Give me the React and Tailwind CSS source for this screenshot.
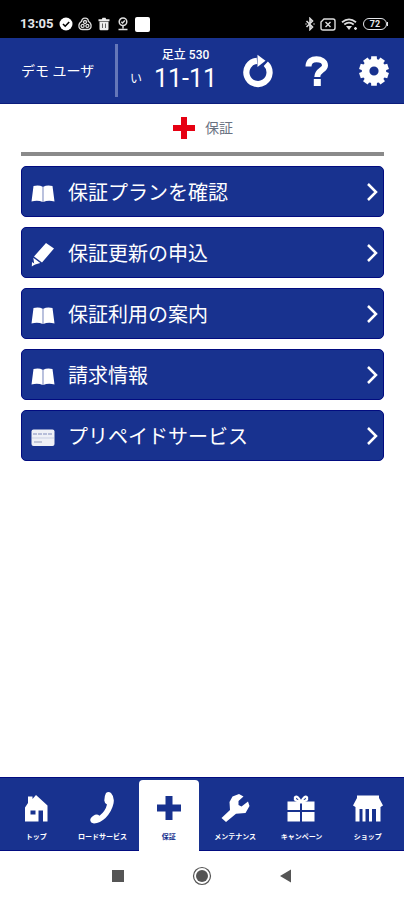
import React from 'react';

const StatusIcons = () => (
  <div className="flex items-center gap-[5px]">
    <svg width="14" height="14" viewBox="0 0 14 14">
      <circle cx="7" cy="7" r="6.5" fill="#fff" />
      <path d="M4 7l2.2 2.2L10.2 5" fill="none" stroke="#000" strokeWidth="1.6" />
    </svg>
    <svg width="14" height="14" viewBox="0 0 14 14" fill="none" stroke="#ddd" strokeWidth="1.3">
      <path d="M7 1.2c2.3 0 3.4 1.6 3.4 3.3 1.7.8 2.7 2.1 2.7 4.2 0 2.6-1.8 3.8-3.8 3.8H4.7c-2 0-3.8-1.2-3.8-3.8 0-2.1 1-3.4 2.7-4.2C3.6 2.8 4.7 1.2 7 1.2z" />
      <circle cx="7" cy="5" r="1.5" />
      <circle cx="4.6" cy="8.9" r="1.5" />
      <circle cx="9.4" cy="8.9" r="1.5" />
    </svg>
    <svg width="14" height="14" viewBox="0 0 14 14" fill="#eee">
      <path d="M1.5 2.2h3.300l.7-1.400h3l.7 1.400h3.300v2h-11zM2.500 4.700h9V12q0 1.200-1.200 1.200H3.700q-1.200 0-1.200-1.200z" />
      <path d="M5.500 6.500v4.500M8.500 6.500v4.500" stroke="#666" strokeWidth="1" />
    </svg>
    <svg width="14" height="14" viewBox="0 0 14 14" fill="none" stroke="#ddd" strokeWidth="1.5">
      <circle cx="7" cy="4.8" r="3.800" />
      <path d="M5.300 4.800l1.300 1.200 2.200-2.400M7 8.500v3M2.500 12.500h9" />
    </svg>
    <span className="w-[15px] h-[15px] rounded-xs bg-white" />
  </div>
);

const StatusBar = () => (
  <div className="h-[38px] shrink-0 bg-black text-white flex items-end justify-between pl-5 pr-4 pb-[6px]">
    <div className="flex items-center gap-[5px]">
      <span className="text-[13px] leading-4 font-bold text-gray-200">13:05</span>
      <StatusIcons />
    </div>
    <div className="flex items-center gap-[5px] pb-px">
      <svg width="10" height="14" viewBox="0 0 10 14" fill="none" stroke="#ddd" strokeWidth="1.6">
        <path d="M1.500 4l6 6L5 12.500v-11L7.500 4l-6 6" />
        <path d="M.5 7h1M8.500 7h1" />
      </svg>
      <svg width="16" height="13" viewBox="0 0 16 13" fill="none" stroke="#ddd" strokeWidth="1.4">
        <path d="M4 1h9q2 0 2 2v7q0 2-2 2H3q-2 0-2-2V4z" />
        <path d="M5.500 4l5 5M10.500 4l-5 5" />
      </svg>
      <svg width="17" height="13" viewBox="0 0 17 13" fill="none" stroke="#ddd">
        <path d="M1 4.200q7-5.600 14 0" strokeWidth="1.800" />
        <path d="M3.300 6.500q4.700-3.600 9.400 0" strokeWidth="1.800" />
        <path d="M5 8h6l-3 4z" fill="#ddd" stroke="none" />
        <path d="M13 10.500h3M14.500 9v3" strokeWidth="1.300" />
      </svg>
      <span className="flex items-center">
        <span className="w-6 h-3 border border-gray-200 rounded-full text-[9px] leading-[10px] font-bold text-center text-gray-200">72</span>
        <span className="w-px h-1 bg-gray-200" />
      </span>
    </div>
  </div>
);

const GEAR_TEETH = [0, 36, 72, 108, 144, 180, 216, 252, 288, 324];

const Header = () => (
  <header className="h-[66px] shrink-0 bg-[#18328f] text-white flex items-center border-b border-[#0b1d7c]">
    <span className="w-[115px] pl-[21px] text-[14px] leading-5 whitespace-nowrap">デモ ユーザ</span>
    <span className="w-[3px] h-[53px] bg-[#6577b9]" />
    <div className="flex items-end pl-3">
      <span className="text-[12px] leading-4 pb-2">い</span>
      <div className="flex flex-col items-center pl-3">
        <span className="text-[12px] leading-4 font-medium whitespace-nowrap">足立 530</span>
        <span className="text-[25px] leading-8 whitespace-nowrap">11-11</span>
      </div>
    </div>
    <div className="flex-1 flex items-center justify-end gap-[26px] pr-[14px]">
      <button type="button" aria-label="更新">
        <svg width="32" height="34" viewBox="0 0 32 34">
          <path d="M23.8 9.800A11.600 11.600 0 1 1 15 6.800" fill="none" stroke="#fff" strokeWidth="6.200" />
          <path d="M15.500 .8L23.500 6.800 15.500 13z" fill="#fff" />
        </svg>
      </button>
      <button type="button" aria-label="ヘルプ">
        <svg width="32" height="34" viewBox="0 0 32 34">
          <path d="M8.500 12.500C8.500 7.300 12 5.200 16.500 5.200S25 7.500 25 11.500C25 16 17.300 16 17.300 23" fill="none" stroke="#fff" strokeWidth="6" />
          <path d="M13.800 25h7v7h-7z" fill="#fff" />
        </svg>
      </button>
      <button type="button" aria-label="設定">
        <svg width="32" height="34" viewBox="0 0 32 34" fill="#fff">
          <circle cx="16" cy="17" r="8.400" fill="none" stroke="#fff" strokeWidth="7.600" />
          {GEAR_TEETH.map((deg) => (
            <path key={deg} d="M13 7l.2-4.800h5.600L19 7z" transform={`rotate(${deg} 16 17)`} />
          ))}
        </svg>
      </button>
    </div>
  </header>
);

const BookIcon = () => (
  <svg width="24" height="18" viewBox="0 0 24 18" fill="#fff">
    <path d="M2.500 1Q8-.2 11.700 1.700V17Q7 15 .5 16.500zM21.500 1Q16-.2 12.300 1.700V17q4.700-2 11.200-.5z" />
  </svg>
);

const PencilIcon = () => (
  <svg width="24" height="24" viewBox="0 0 24 24" fill="#fff">
    <path d="M15 0L23 5.500 11 19.500 3 13.500zM2.300 14.800l7 5.200-6 1.700z" />
    <path d="M1 19l3.200 2.300L.8 23.500z" />
  </svg>
);

const CardIcon = () => (
  <svg width="24" height="18" viewBox="0 0 24 18">
    <rect x=".5" y=".5" width="23" height="16.500" rx="2" fill="#eef0f6" />
    <path d="M2 5h20" stroke="#a5add0" strokeWidth="1.500" strokeDasharray="4 1" />
    <path d="M1 9h22" stroke="#c9cfe3" strokeWidth="1" />
    <path d="M3 13h8" stroke="#a3abc5" strokeWidth="1.200" />
  </svg>
);

const menuItems = [
  { label: '保証プランを確認', Icon: BookIcon },
  { label: '保証更新の申込', Icon: PencilIcon },
  { label: '保証利用の案内', Icon: BookIcon },
  { label: '請求情報', Icon: BookIcon },
  { label: 'プリペイドサービス', Icon: CardIcon },
];

const MenuButton = ({ label, Icon }) => (
  <button
    type="button"
    className="w-full h-[51px] flex items-center pl-[9px] pr-[5px] rounded-[5px] bg-[#18328f] border border-[#020c80] text-white text-left"
  >
    <span className="w-[37px] shrink-0 pt-1">
      <Icon />
    </span>
    <span className="flex-1 pt-[2px] text-[20px] leading-7">{label}</span>
    <svg width="12" height="20" viewBox="0 0 12 20" fill="none" stroke="#fff" strokeWidth="2.500">
      <path d="M2 2l8 8-8 8" />
    </svg>
  </button>
);

const HomeIcon = () => (
  <svg width="30" height="30" viewBox="0 0 30 30" fill="#fff">
    <path d="M7 3.500H11.500V6L15 2 26.500 12.500V28.500H22V17.500H17.500V28.500H4V14.500L7 10z" />
    <path d="M9.500 17.500h5v4h-5z" fill="#18328f" />
  </svg>
);

const PhoneIcon = () => (
  <svg width="30" height="34" viewBox="0 0 30 34" fill="#fff">
    <path d="M19 2Q21.500-.2 24 2 27.800 6 26.500 12.500 24.800 20.500 18.500 27 13 32 7 32.500 3.500 32 3.200 29 3.500 26 8 23.800 10.500 23 12.500 24.800 18.500 20 20 13.500 17.500 12.500 17.300 9.500 17.300 5 19 2z" />
  </svg>
);

const PlusIcon = () => (
  <svg width="26" height="26" viewBox="0 0 26 26" fill="#18328f">
    <path d="M9.500 1h7v8.500H25v7h-8.500V25h-7v-8.500H1v-7h8.500z" />
  </svg>
);

const WrenchIcon = () => (
  <svg width="30" height="30" viewBox="0 0 30 30" fill="#fff">
    <path d="M1.500 25L10 17 9.500 9 12.500 3.500 19 1 23.500 3.500 18.500 8V12L21.500 13.500 28 8.500 29.500 13 25.500 20 16 20.800 6 29z" />
  </svg>
);

const GiftIcon = () => (
  <svg width="30" height="30" viewBox="0 0 30 30" fill="#fff">
    <path d="M1.500 8.500H14V17H1.500zM16 8.500h12.500V17H16zM1.500 19H14v9.500H1.500zM16 19h12.500v9.500H16z" />
    <path d="M15 9Q8 8 9 4.500 11 1.500 15 9zM15 9Q22 8 21 4.500 19 1.500 15 9z" fill="none" stroke="#fff" strokeWidth="2.400" />
  </svg>
);

const ShopIcon = () => (
  <svg width="32" height="30" viewBox="0 0 32 30" fill="#fff">
    <path d="M5 2.500h22V5l4 7.500-2.500 1.500h-25L1 12.500 5 5z" />
    <path d="M3.500 13h25v3h-25zM3.500 14H7.500v14.500h-4zM10.500 14h3v14.500h-3zM17 14h3v14.500h-3zM24 14h4.500v14.500H24z" />
  </svg>
);

const tabs = [
  { label: 'トップ', Icon: HomeIcon },
  { label: 'ロードサービス', Icon: PhoneIcon },
  { label: '保証', Icon: PlusIcon, active: true },
  { label: 'メンテナンス', Icon: WrenchIcon },
  { label: 'キャンペーン', Icon: GiftIcon },
  { label: 'ショップ', Icon: ShopIcon },
];

const TabBar = () => (
  <nav className="h-[74px] shrink-0 bg-[#18328f] border-y border-[#020c80] px-[3px] grid grid-cols-6">
    {tabs.map(({ label, Icon, active }) => (
      <a
        key={label}
        href="#"
        className={
          active
            ? 'mt-[2px] mx-[3px] -mb-px rounded-t-[4px] bg-white text-[#18328f] flex flex-col items-center'
            : 'mt-[2px] mx-[3px] text-white flex flex-col items-center'
        }
      >
        <span className="h-[51px] pt-1 flex items-center justify-center">
          <Icon />
        </span>
        <span className="text-[7px] leading-3 font-bold whitespace-nowrap">{label}</span>
      </a>
    ))}
  </nav>
);

const SystemNav = () => (
  <div className="h-[49px] shrink-0 flex items-center justify-center gap-[67px]">
    <button type="button" aria-label="履歴">
      <svg width="14" height="20" viewBox="0 0 14 20">
        <path d="M1 4h12v12H1z" fill="#555" />
      </svg>
    </button>
    <button type="button" aria-label="ホーム">
      <svg width="20" height="20" viewBox="0 0 20 20">
        <circle cx="10" cy="10" r="8.500" fill="none" stroke="#555" strokeWidth="1.200" />
        <circle cx="10" cy="10" r="6" fill="#555" />
      </svg>
    </button>
    <button type="button" aria-label="戻る">
      <svg width="14" height="20" viewBox="0 0 14 20">
        <path d="M1 10l11-6.500v13z" fill="#555" />
      </svg>
    </button>
  </div>
);

const App = () => {
  return (
    <div className="min-h-screen flex flex-col bg-white font-['Roboto','Noto_Sans_CJK_JP',sans-serif]">
      <StatusBar />
      <Header />
      <main className="flex-1 pl-[21px] pr-5 pb-5">
        <h1 className="h-[52px] pt-[2px] pb-[2px] flex items-center justify-center gap-[9px] text-[14px] leading-5 text-gray-500 border-b-4 border-[#8a8a8a]">
          <svg width="24" height="24" viewBox="0 0 24 24" fill="#e60012">
            <path d="M9 1h6v8h8v6h-8v8H9v-8H1V9h8z" />
          </svg>
          保証
        </h1>
        <div className="pt-[10px] flex flex-col gap-[10px]">
          {menuItems.map((item) => (
            <MenuButton key={item.label} {...item} />
          ))}
        </div>
      </main>
      <TabBar />
      <SystemNav />
    </div>
  );
};

export default App;
